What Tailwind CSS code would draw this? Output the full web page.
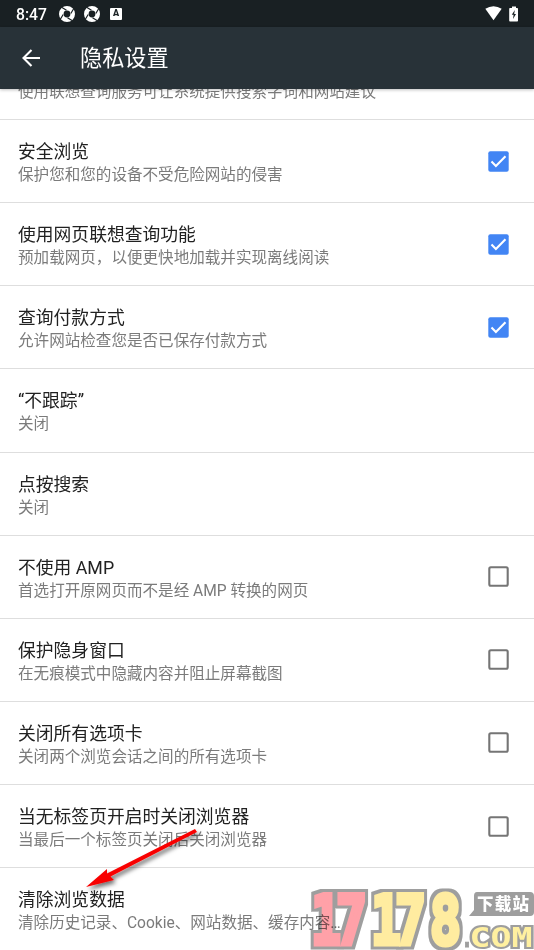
<!DOCTYPE html>
<html lang="zh-CN">
<head>
<meta charset="utf-8">
<title>隐私设置</title>
<script src="https://cdn.jsdelivr.net/npm/@tailwindcss/browser@4"></script>
</head>
<body class="bg-white">
<div class="relative flex h-[950px] w-[534px] flex-col overflow-hidden bg-white font-[Roboto,'Noto_Sans_CJK_SC',sans-serif]">
  <div class="flex h-[27px] shrink-0 items-center bg-[#192023] pl-[16px] text-white">
    <span class="w-[43px] pt-px text-[15.7px] font-medium leading-[27px]">8:47</span>
    <svg class="h-4 w-4" viewBox="0 0 16 16"><circle cx="8" cy="8" r="5.7" fill="none" stroke="#fff" stroke-width="4.6"/><path d="M3 1.5 7.5 4.2M14.5 3 11.8 7.5M13 14.5 8.5 11.8M1.500 13 4.200 8.500" stroke="#192023" stroke-width="1.2"/></svg>
    <svg class="ml-[9px] h-4 w-4" viewBox="0 0 16 16"><circle cx="8" cy="8" r="5.7" fill="none" stroke="#fff" stroke-width="4.6"/><path d="M3 1.5 7.5 4.2M14.5 3 11.8 7.5M13 14.5 8.5 11.8M1.500 13 4.200 8.500" stroke="#192023" stroke-width="1.2"/></svg>
    <span class="ml-[10px] flex h-3 w-[12px] items-center justify-center rounded-[1px] bg-white text-[9px] font-black leading-none text-[#192023]">A</span>
    <svg class="ml-auto h-[15px] w-[17px]" viewBox="0 0 17 15"><path d="M.3 2.8Q8.5-2.5 16.7 2.8L8.5 14.3Z" fill="#fff"/></svg>
    <svg class="ml-[7px] mr-[15px] h-4 w-[10px]" viewBox="0 0 10 16"><path d="M1 2h2V.5h4V2h1.2q.8 0 .8.8v12q0 .7-.8.7H1q-.8 0-.8-.7v-12Q.2 2 1 2Z" fill="#fff"/><path d="M5.8 4 2.8 8.8h1.8L4 13l3-5H5.2Z" fill="#192023"/></svg>
  </div>
  <header class="z-10 flex h-[62px] shrink-0 items-center bg-[#283238] pl-[22px] text-white shadow-[0_1px_3px_rgba(0,0,0,.25)]">
    <svg class="h-[18px] w-[18px]" viewBox="0 0 18 18" fill="none" stroke="#fff" stroke-width="2.1"><path d="M18 9H2M9.5 1 1.5 9l8 8"/></svg>
    <h1 class="ml-10 text-[22.2px] leading-[30px]">隐私设置</h1>
  </header>
  <main id="list" class="-mt-[53px] flex flex-col">
    <div class="flex h-[84px] shrink-0 flex-col justify-end border-b border-[#dedede] pb-[16px] pl-[18px] text-[15.57px] leading-[22px] text-[#7b7b7b]">使用联想查询服务可让系统提供搜索字词和网站建议</div>
  </main>
  <svg class="pointer-events-none absolute left-0 top-0 h-[950px] w-[534px]" viewBox="0 0 534 950">
    <defs>
      <filter id="shadow" x="-20%" y="-20%" width="150%" height="150%"><feDropShadow dx="2" dy="3" stdDeviation="2" flood-color="#000" flood-opacity=".55"/></filter>
      <filter id="outline" filterUnits="userSpaceOnUse" x="300" y="880" width="234" height="70" color-interpolation-filters="sRGB">
        <feMorphology in="SourceAlpha" operator="dilate" radius="3" result="edge"/>
        <feFlood flood-color="#9e9e9e"/>
        <feComposite in2="edge" operator="in" result="grey"/>
        <feMerge><feMergeNode in="grey"/><feMergeNode in="SourceGraphic"/></feMerge>
      </filter>
    </defs>
    <path d="M195 829 197 832 110.500 876.500 114 880 86 887 107 869 107 873.500Z" fill="#f80000" filter="url(#shadow)"/>
    <g style="mix-blend-mode:multiply">
      <g filter="url(#outline)" font-family="'DejaVu Sans Mono'" font-weight="700" font-size="67" stroke-width="5" stroke-linejoin="miter">
        <text x="311" y="944" fill="#ffa1a8" stroke="#ffa1a8" textLength="30" lengthAdjust="spacingAndGlyphs">1</text>
        <text x="336" y="944" fill="#ffa1a8" stroke="#ffa1a8" textLength="31" lengthAdjust="spacingAndGlyphs">7</text>
        <text x="371" y="944" fill="#ffeca0" stroke="#ffeca0" textLength="30" lengthAdjust="spacingAndGlyphs">1</text>
        <text x="395" y="944" fill="#ffeca0" stroke="#ffeca0" textLength="31" lengthAdjust="spacingAndGlyphs">7</text>
        <text x="430" y="944" fill="#ffeca0" stroke="#ffeca0" textLength="31" lengthAdjust="spacingAndGlyphs">8</text>
      </g>
      <g fill="#fff0a0" stroke="#9e9e9e" font-family="'DejaVu Sans Mono'" font-weight="700" font-size="27" stroke-width="4" paint-order="stroke">
        <text x="461" y="947" fill="#9e9e9e" stroke-width="1" textLength="12" lengthAdjust="spacingAndGlyphs">.</text>
        <text x="469.500" y="947" textLength="63" lengthAdjust="spacingAndGlyphs">COM</text>
      </g>
    </g>
    <path d="M477 892H530q4 0 4 4v16q0 4-4 4H469l5-6V896q0-4 3-4Z" fill="#9e9e9e"/>
    <text x="477" y="910" fill="#fff" font-family="'Noto Sans CJK SC'" font-weight="900" font-size="16.5" textLength="52">下载站</text>
  </svg>
</div>
<template id="row">
  <section class="flex h-[83.13px] shrink-0 items-center border-b border-[#dedede] pl-[18px] pr-[25px]">
    <div class="flex-1 whitespace-nowrap pt-[5.5px]">
      <h2 class="text-[17.8px] leading-[23px] text-[#212121]"></h2>
      <p class="mt-px text-[15.57px] leading-[23.500px] text-[#7b7b7b]"></p>
    </div>
    <svg class="checked h-[21px] w-[21px]" viewBox="0 0 21 21"><rect x=".3" y=".3" width="20.400" height="20.400" rx="2" fill="#4285f4"/><path d="m3.500 10.500 4.400 4.400 9.600-9.600" fill="none" stroke="#fff" stroke-width="2.100"/></svg>
    <svg class="empty h-[21px] w-[21px]" viewBox="0 0 21 21"><rect x="1.300" y="1.300" width="18.400" height="18.400" rx="1.500" fill="none" stroke="#757575" stroke-width="2.100"/></svg>
  </section>
</template>
<script>
const rows = [
  ['安全浏览','保护您和您的设备不受危险网站的侵害','checked'],
  ['使用网页联想查询功能','预加载网页，以便更快地加载并实现离线阅读','checked'],
  ['查询付款方式','允许网站检查您是否已保存付款方式','checked'],
  ['“不跟踪”','关闭',''],
  ['点按搜索','关闭',''],
  ['不使用 AMP','首选打开原网页而不是经 AMP 转换的网页','empty'],
  ['保护隐身窗口','在无痕模式中隐藏内容并阻止屏幕截图','empty'],
  ['关闭所有选项卡','关闭两个浏览会话之间的所有选项卡','empty'],
  ['当无标签页开启时关闭浏览器','当最后一个标签页关闭后关闭浏览器','empty'],
  ['清除浏览数据','清除历史记录、Cookie、网站数据、缓存内容…','']
];
for (const [title, detail, state] of rows) {
  const row = document.getElementById('row').content.cloneNode(true);
  row.querySelector('h2').textContent = title;
  row.querySelector('p').textContent = detail;
  for (const icon of ['checked','empty']) if (icon !== state) row.querySelector('.' + icon).remove();
  document.getElementById('list').append(row);
}
</script>
</body>
</html>
